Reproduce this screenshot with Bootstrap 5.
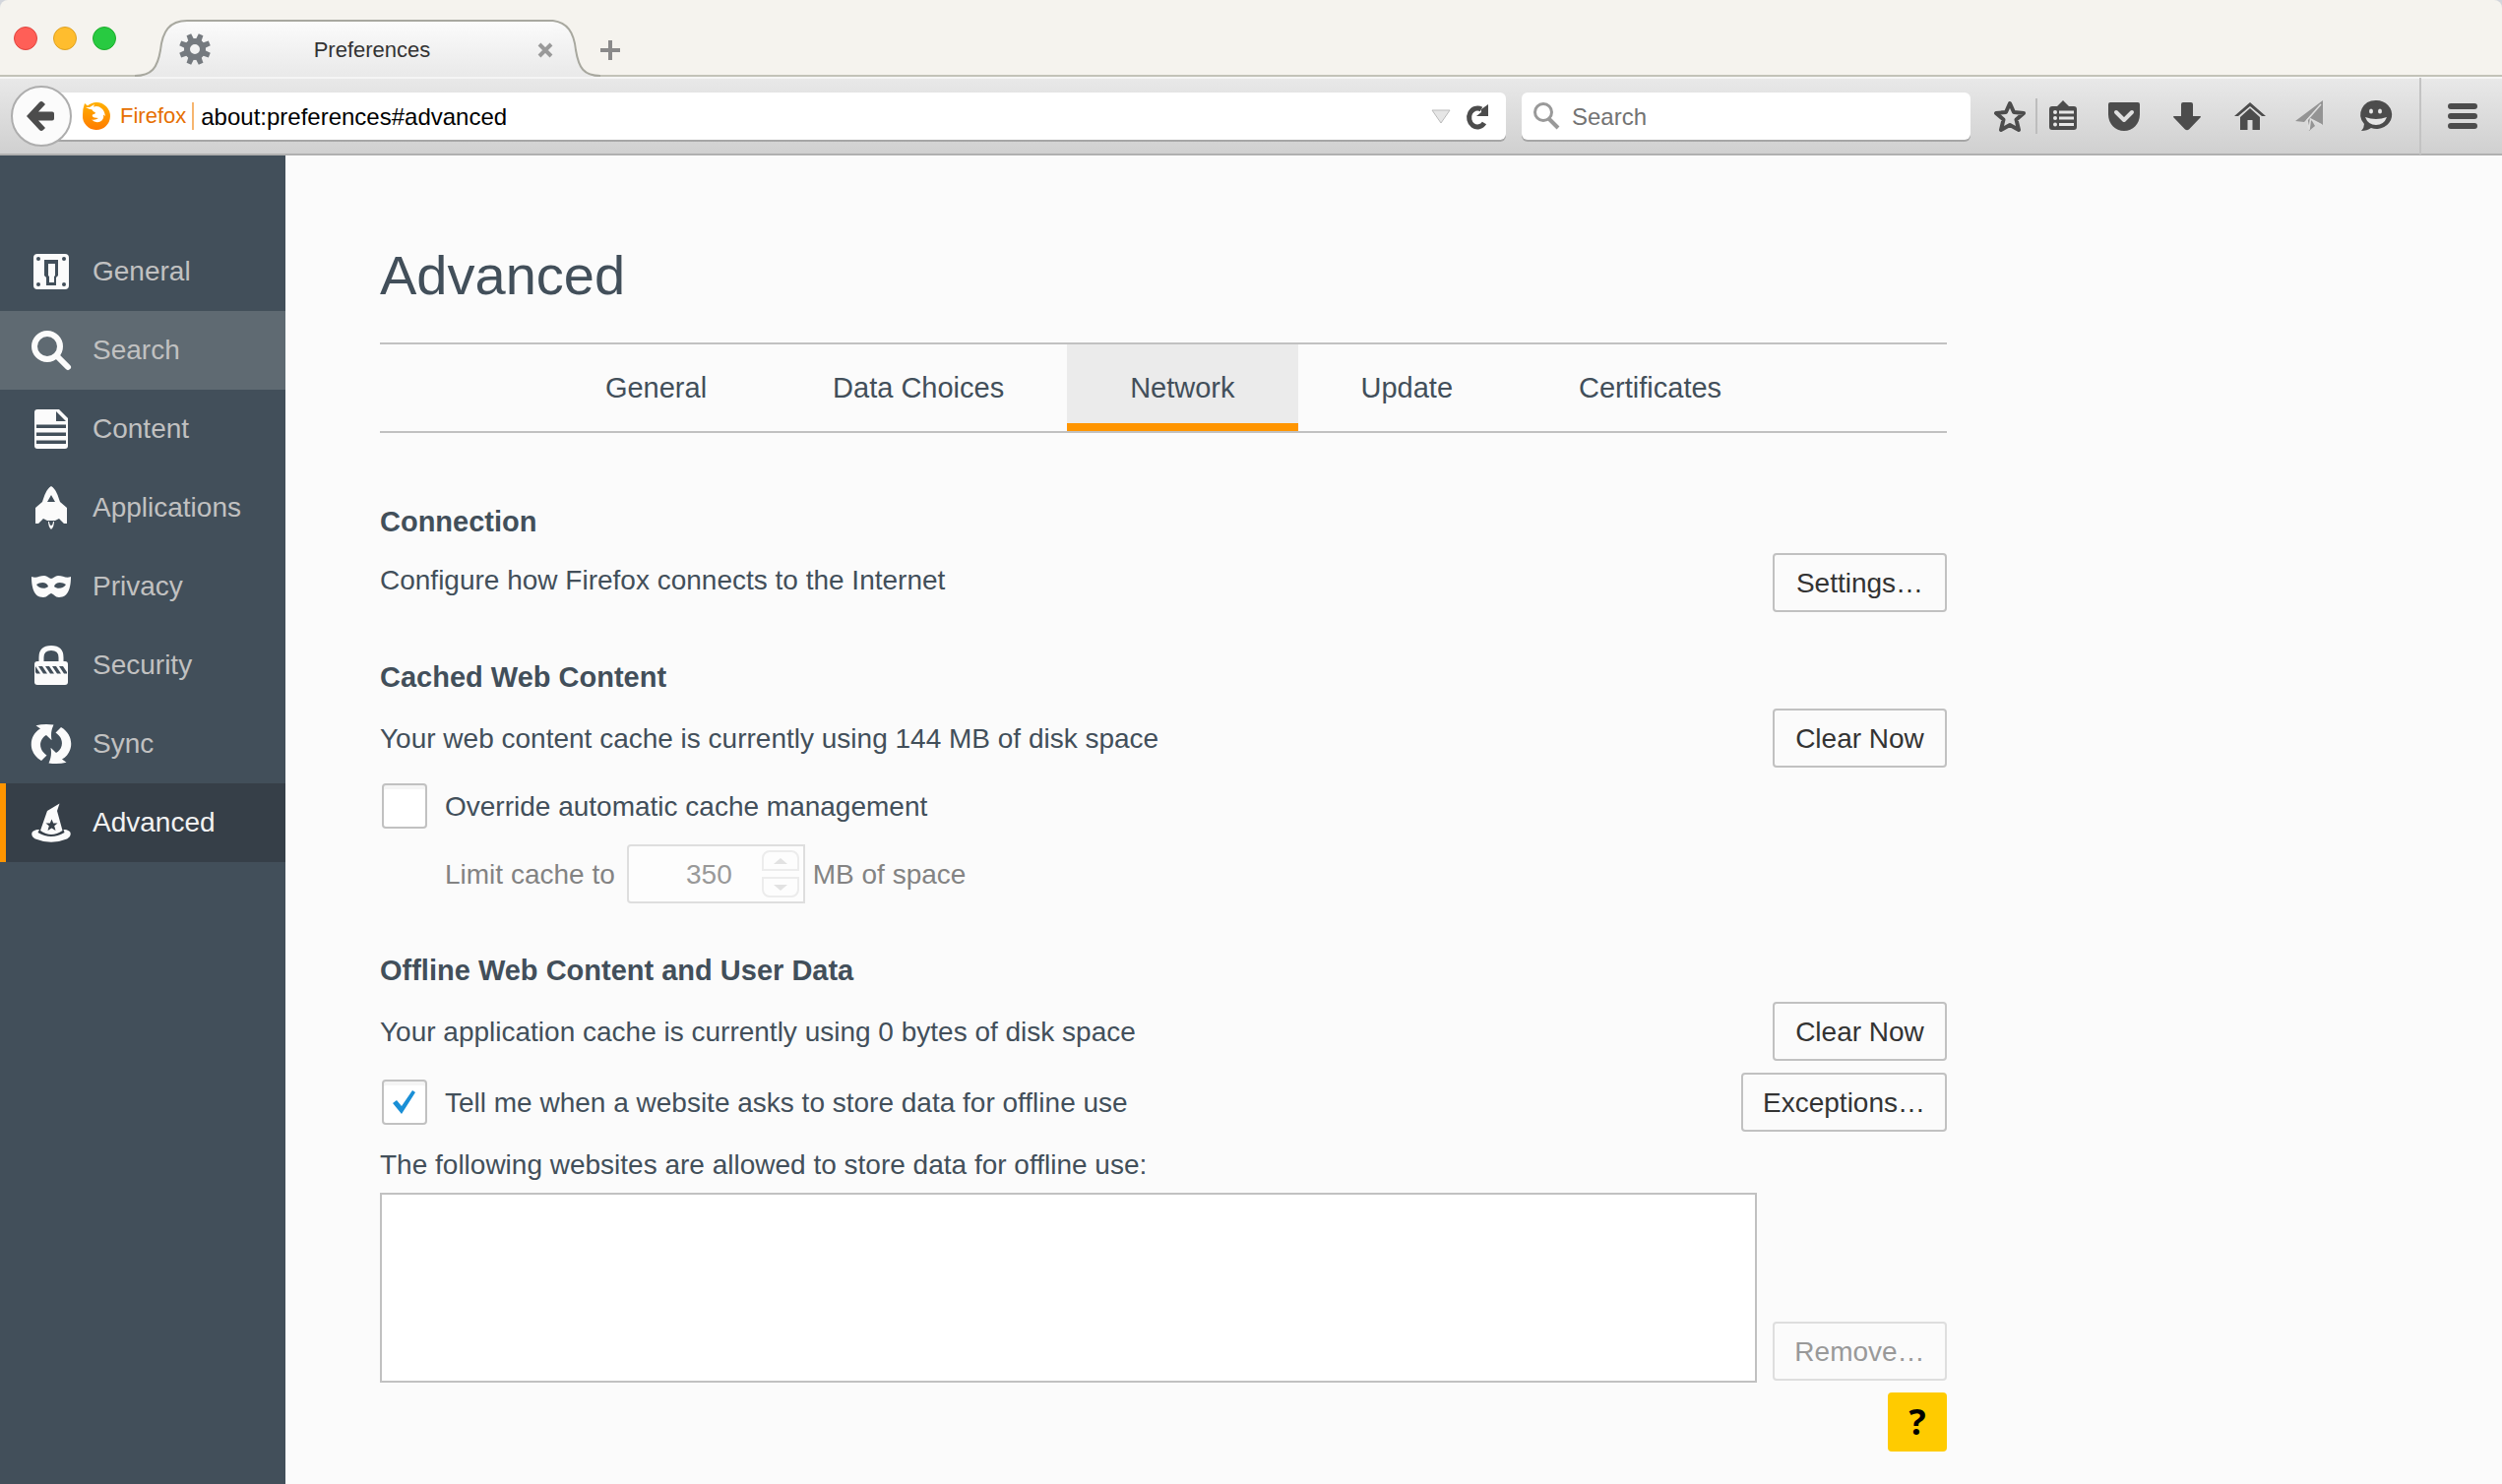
<!DOCTYPE html>
<html lang="en">
<head>
<meta charset="utf-8">
<meta name="viewport" content="width=device-width, initial-scale=1">
<title>Preferences</title>
<link href="https://cdn.jsdelivr.net/npm/bootstrap@5.3.0/dist/css/bootstrap.min.css" rel="stylesheet">
<script src="https://cdn.jsdelivr.net/npm/bootstrap@5.3.0/dist/js/bootstrap.bundle.min.js" defer></script>
<style>
  :root { --ink: #424f5a; --rule: #c1c1c1; --accent: #ff9500; --glyph: #4c4c4c; }
  body { font-family: "Liberation Sans", Arial, sans-serif; font-size: 28px; line-height: 36px; color: var(--ink); background: #fbfbfb; }
  svg { display: block; flex: none; overflow: visible; }
  .plain-btn { border: 0; padding: 0; background: none; color: var(--glyph); line-height: 1; }

  /* tab strip */
  .chrome-top { background: #d3d6dc; }
  .tab-strip { height: 78px; border-radius: 8px 8px 0 0; background: linear-gradient(#c2c2b8, #c2c2b8) bottom / 100% 2px no-repeat #f5f3ee; }
  .lights { gap: 16px; padding-left: 14px; width: 137px; }
  .light { width: 24px; height: 24px; border-radius: 50%; border: 1px solid; }
  .light-close { background: #ff5f57; border-color: #e0443e; }
  .light-min { background: #ffbd2e; border-color: #dea123; }
  .light-max { background: #28ca41; border-color: #1dad2b; }
  .tab-body { width: 372px; height: 58px; border-top: 2px solid #a8a89f; background: linear-gradient(#fbfbfb, #e9e9e9); font-size: 22px; line-height: 28px; color: #333; padding-top: 2px; }

  /* toolbar */
  .tool-bar { height: 80px; padding: 2px 24px 0 11px; background: linear-gradient(#f5f5f5, #f5f5f5) top / 100% 2px no-repeat, linear-gradient(#e9e9e9, #d0d0d0); border-bottom: 2px solid #b0b0b0; }
  .back-btn { width: 62px; height: 62px; border-radius: 50%; border: 2px solid #adadad; background: #fbfbfb; z-index: 1; margin-right: -31px; padding-right: 3px; }
  .field { height: 48px; background: #fff; border-radius: 6px; box-shadow: 0 2px 0 #a6a6a6; }
  .field input { border: 0; outline: 0; background: none; min-width: 0; padding: 2px 0 0; font-size: 24px; line-height: 32px; color: #000; }
  .field input::placeholder { color: #737373; opacity: 1; }
  .url-field { padding: 0 18px 0 42px; }
  .identity { font-size: 22px; line-height: 28px; color: #e66f00; border-right: 2px solid #f6b56f; padding-right: 6px; margin: 0 7px 0 10px; }
  .search-field { flex: 0 1 456px; margin-left: 16px; padding: 0 12px; }
  .icon-row { gap: 32px; }
  .short-line { width: 2px; height: 36px; background: #bdbdbd; margin: 0 8px 0 10px; }
  .tall-line { width: 2px; height: 78px; background: #c3c3c3; margin: 0 26px 0 28px; }

  /* categories */
  .side { width: 290px; background: var(--ink); padding-top: 78px; }
  .side a { display: flex; align-items: center; gap: 22px; height: 80px; padding: 0 0 0 32px; color: #c1c1c1; border-radius: 0; }
  .side svg { fill: #fbfbfb; --hole: #424f5a; }
  .side a.hovered { background: #5f6a72; }
  .side a.active { background: #363f48; color: #f2f2f2; box-shadow: inset 6px 0 0 var(--accent); }
  .side a.active svg { --hole: #363f48; }

  /* pane */
  .pane { padding: 86px 96px 32px; }
  .pane-inner { max-width: 1592px; }
  .pane h1 { font-size: 56px; line-height: 72px; font-weight: 400; margin: 0 0 32px; }
  .pane h2 { font-size: 29px; line-height: 36px; font-weight: 700; margin: 48px 0 14px; }
  .pane .first-head { margin-top: 72px; }
  .pane span, .pane label { padding-top: 2px; }
  .pane .high-text { padding-top: 10px; }
  .pane-tabs { height: 92px; border: solid var(--rule); border-width: 2px 0; }
  .pane-tabs button { border: 0; background: none; padding: 0 64px; font-size: 29px; color: var(--ink); }
  .pane-tabs button.active { background: #ebebeb; box-shadow: inset 0 -8px 0 var(--accent); }
  .pref-btn, .pref-btn:disabled { height: 60px; min-width: 177px; padding: 2px 20px 0; border: 2px solid var(--rule); border-radius: 4px; background: #fbfbfb; font-size: 28px; line-height: 36px; color: #333; }
  .pref-btn:disabled { color: #999; border-color: #dedede; opacity: 1; margin-bottom: 2px; }
  .tick { width: 46px !important; height: 46px !important; margin: 0 !important; border: 2px solid var(--rule); border-radius: 4px !important; background-color: #fff; box-shadow: inset 0 4px 0 #f5f5f5; flex: none; }
  .tick:checked { background-color: #fff; border-color: var(--rule); background-size: 42px 42px; background-image: url("data:image/svg+xml,%3Csvg xmlns='http://www.w3.org/2000/svg' viewBox='0 0 42 42'%3E%3Cpath fill='%231a8fd6' d='M9 22l4-3 5 6L29 9l3 2-14 22z'/%3E%3C/svg%3E"); }
  .tick-row { gap: 18px; padding-left: 2px; }
  .sub-row { margin-top: 16px; padding: 0 0 2px 66px; color: #838383; }
  .spin-box { width: 181px; height: 60px; margin: 0 8px 0 12px; border: 2px solid #dedede; border-radius: 4px 0 0 4px; background: #fdfdfd; padding-right: 4px; }
  .spin-box input { flex: 1; min-width: 0; border: 0; background: none; color: #999; text-align: right; padding: 2px 30px 0 0; appearance: textfield; -moz-appearance: textfield; }
  .spin-box input::-webkit-inner-spin-button { appearance: none; margin: 0; }
  .spin-box button { display: flex; align-items: center; justify-content: center; width: 38px; height: 21px; border: 2px solid #ececec; background: #fdfdfd; padding: 0; }
  .spin-pair { gap: 6px; }
  .spin-up { border-radius: 8px 8px 0 0; }
  .spin-down { border-radius: 0 0 8px 8px; }
  .offline-row { margin-top: 12px; }
  .site-head { margin: 16px 0 10px; }
  .site-list { height: 193px; border: 2px solid var(--rule); background: #fff; }
  .help-btn { width: 60px; height: 60px; margin-top: 10px; border: 0; border-radius: 4px; background: #ffcb00; color: #000; font: 700 36px/44px "Open Sans", sans-serif; padding: 0; }
</style>
</head>
<body class="d-flex flex-column min-vh-100">

<header class="chrome-top">
  <div class="tab-strip d-flex align-items-end">
    <div class="lights d-flex align-items-center align-self-stretch">
      <span class="light light-close"></span><span class="light light-min"></span><span class="light light-max"></span>
    </div>
    <svg width="53" height="58" viewBox="0 0 53 58">
      <defs><linearGradient id="tabFill" gradientUnits="userSpaceOnUse" x1="0" y1="0" x2="0" y2="58"><stop stop-color="#fbfbfb"/><stop offset="1" stop-color="#e9e9e9"/></linearGradient></defs>
      <path fill="url(#tabFill)" d="M0 58C17 57 23 49 26 31C28 12 35 0 53 0V58Z"/>
      <path fill="none" stroke="#a8a89f" stroke-width="2" d="M0 57C17 57 23 49 26 31C28 12 35 1 53 1"/>
    </svg>
    <div class="tab-body d-flex align-items-center">
      <svg width="16" height="32" viewBox="0 0 16 32">
        <g transform="translate(8 15)" fill="#757a7f">
          <circle r="8" fill="none" stroke="#757a7f" stroke-width="6"/>
          <g transform="rotate(22.5)">
            <path d="M-3 -9L-2.500 -16H2.500L3 -9Z"/><path d="M-3 -9L-2.500 -16H2.500L3 -9Z" transform="rotate(45)"/><path d="M-3 -9L-2.500 -16H2.500L3 -9Z" transform="rotate(90)"/><path d="M-3 -9L-2.500 -16H2.500L3 -9Z" transform="rotate(135)"/><path d="M-3 -9L-2.500 -16H2.500L3 -9Z" transform="rotate(180)"/><path d="M-3 -9L-2.500 -16H2.500L3 -9Z" transform="rotate(225)"/><path d="M-3 -9L-2.500 -16H2.500L3 -9Z" transform="rotate(270)"/><path d="M-3 -9L-2.500 -16H2.500L3 -9Z" transform="rotate(315)"/>
          </g>
        </g>
      </svg>
      <span class="flex-grow-1 text-center ps-1">Preferences</span>
      <button class="plain-btn" aria-label="Close tab"><svg width="16" height="16" viewBox="0 0 16 16"><path d="M2 2L14 14M14 2L2 14" stroke="#999" stroke-width="4"/></svg></button>
    </div>
    <svg width="48" height="58" viewBox="6 0 48 58">
      <path fill="url(#tabFill)" d="M6 0C20 2 27 12 29 31C32 49 37 57 54 58H6Z"/>
      <path fill="none" stroke="#a8a89f" stroke-width="2" d="M6 1C20 3 27 12 29 31C32 49 37 57 54 57"/>
    </svg>
    <button class="plain-btn align-self-center pt-4" aria-label="New tab"><svg width="20" height="20" viewBox="0 0 20 20"><path d="M10 0V20M0 10H20" stroke="#8a8a8a" stroke-width="4"/></svg></button>
  </div>

  <div class="tool-bar d-flex align-items-center">
    <button class="back-btn plain-btn position-relative d-flex align-items-center justify-content-center" aria-label="Back">
      <svg width="28" height="30" viewBox="0 0 28 30"><path fill="#4c4c4c" d="M0 15L13 1Q15 -1 17 1L19 3L12 10.500H26Q28 10.500 28 12.500V17.500Q28 19.500 26 19.500H12L19 27L17 29Q15 31 13 29Z"/></svg>
    </button>
    <div class="field url-field d-flex align-items-center flex-grow-1">
      <svg width="28" height="28" viewBox="0 0 28 28">
        <defs><linearGradient id="fox" x1="0" y1="0" x2="0" y2="1"><stop stop-color="#ffb000"/><stop offset="1" stop-color="#ff7b00"/></linearGradient></defs>
        <path fill="url(#fox)" d="M2 1L5 3.500Q9 0 14 0A14 14 0 1 1 0 13Q0 6 2 1Z"/>
        <path fill="#fff" d="M3 5L7 5L12 2L11 4.500Q16 3 19 6Q22 8 23 14L21 12.500Q22 17 18 19.500Q13 21.500 9 17.500Q13 18.500 16 16L12 15.500Q9 14.500 10 12.500Q13 12 13 10.500L10.500 9Q10 6.500 7 7Z"/>
      </svg>
      <span class="identity">Firefox</span>
      <input class="flex-grow-1" type="text" aria-label="Address" value="about:preferences#advanced">
      <button class="plain-btn" aria-label="Show history"><svg width="20" height="15" viewBox="0 0 20 15"><path d="M1 1H19L10 14Z" fill="#e6e6e6" stroke="#bbb"/></svg></button>
      <button class="plain-btn ms-3" aria-label="Reload"><svg width="22" height="24" viewBox="0 0 22 24"><path d="M18 19A8.500 9.500 0 1 1 15 5" fill="none" stroke="#4c4c4c" stroke-width="5"/><path fill="#4c4c4c" d="M22 0V12H10L15 8V5Z"/></svg></button>
    </div>
    <div class="field search-field d-flex align-items-center">
      <svg width="27" height="28" viewBox="0 0 27 28"><circle cx="10" cy="10" r="8.500" fill="none" stroke="#999" stroke-width="3"/><path d="M15 16L25 26" stroke="#999" stroke-width="4"/></svg>
      <input class="flex-grow-1 ms-2 ps-1" type="search" aria-label="Search the web" placeholder="Search">
    </div>
    <button class="plain-btn ms-4" aria-label="Bookmark this page"><svg width="32" height="32" viewBox="0 0 32 32"><path fill="none" stroke="#4c4c4c" stroke-width="4" stroke-linejoin="round" d="M16 3L20 12L30 13L22.500 19.500L25 30L16 25L7 30L9.500 19.500L2 13L12 12Z"/></svg></button>
    <span class="short-line"></span>
    <div class="icon-row d-flex align-items-center">
      <button class="plain-btn" aria-label="Bookmarks"><svg width="32" height="32" viewBox="0 0 32 32"><path fill="#4c4c4c" d="M12 6L18 0L24 6H29Q32 6 32 9V27Q32 30 29 30H7Q4 30 4 27V9Q4 6 7 6Z"/><g fill="#e6e6e6"><circle cx="10" cy="12" r="2"/><circle cx="10" cy="18" r="2"/><circle cx="10" cy="24.500" r="2"/><path d="M14 10.500H29V13.500H14ZM14 16.500H29V19.500H14ZM14 23H29V26H14Z"/></g></svg></button>
      <button class="plain-btn" aria-label="Pocket"><svg width="32" height="32" viewBox="0 0 32 32"><path fill="#4c4c4c" d="M2 2H30Q32 2 32 4V14C32 24 25 31 16 31S0 24 0 14V4Q0 2 2 2Z"/><path fill="none" stroke="#e0e0e0" stroke-width="4" stroke-linecap="round" stroke-linejoin="round" d="M8 12L16 20L24 12"/></svg></button>
      <button class="plain-btn" aria-label="Downloads"><svg width="32" height="32" viewBox="0 0 32 32"><path fill="#4c4c4c" d="M10 4Q10 2 12 2H20Q22 2 22 4V16H29Q31 16 29 18L18 29.500Q16 31 14 29.500L3 18Q1 16 3 16H10Z"/></svg></button>
      <button class="plain-btn" aria-label="Home"><svg width="32" height="32" viewBox="0 0 32 32"><path fill="#4c4c4c" d="M16 2L32 16H28L16 6L4 16H0ZM16 8L26 17V30H18.500V20H13.500V30H6V17Z"/></svg></button>
      <button class="plain-btn" aria-label="Share"><svg width="32" height="32" viewBox="0 0 32 32"><path fill="#949494" d="M26 0L-2 21L7 22L22 6L10 20L12 31L18 26L14 19L26 25Z"/><path d="M24 4L10 20L12 30L13.500 19L25 25" fill="none" stroke="#dedede" stroke-width="1.500"/></svg></button>
      <button class="plain-btn" aria-label="Chat"><svg width="32" height="32" viewBox="0 0 32 32"><path fill="#4c4c4c" d="M16 0A15.500 14.500 0 1 1 11 28Q7 31 1 31Q4 28 4 24A15.500 14.500 0 0 1 16 0Z"/><g fill="#e6e6e6"><ellipse cx="11" cy="11" rx="2" ry="2.500"/><ellipse cx="20" cy="11" rx="2" ry="2.500"/><path d="M5 17Q16 21 27 17Q24 25 16 25T5 17Z"/></g></svg></button>
    </div>
    <span class="tall-line"></span>
    <button class="plain-btn" aria-label="Open menu"><svg width="32" height="28" viewBox="0 0 32 28"><path stroke="#4c4c4c" stroke-width="6" stroke-linecap="round" d="M4 4H28M4 14H28M4 24H28"/></svg></button>
  </div>
</header>

<div class="d-flex flex-grow-1">
  <nav class="side nav flex-column flex-nowrap flex-shrink-0" aria-label="Categories">
    <a class="nav-link" href="#general"><svg width="40" height="40" viewBox="0 0 40 40"><rect x="2" y="2" width="36" height="36" rx="4"/><g style="fill:var(--hole)"><circle cx="7" cy="7" r="2"/><circle cx="33" cy="7" r="2"/><circle cx="7" cy="33" r="2"/><circle cx="33" cy="33" r="2"/><path d="M13 8H27V24L25 26V34H15V26L13 24Z"/></g><path d="M17 12H24V24L23 25V31H18V25L17 24Z"/></svg>General</a>
    <a class="nav-link hovered" href="#search"><svg width="40" height="40" viewBox="0 0 40 40"><circle cx="16" cy="16" r="13" fill="none" stroke="#fbfbfb" stroke-width="6"/><path d="M26 26L37 37" stroke="#fbfbfb" stroke-width="6" stroke-linecap="round"/></svg>Search</a>
    <a class="nav-link" href="#content"><svg width="40" height="40" viewBox="0 0 40 40"><path d="M6 0H28L37 9V37Q37 40 34 40H6Q3 40 3 37V3Q3 0 6 0Z"/><path style="fill:var(--hole)" d="M25 2V12H35ZM5 15.500H35V19H5ZM5 23.500H35V27H5ZM5 31.500H35V35H5Z"/></svg>Content</a>
    <a class="nav-link" href="#applications"><svg width="40" height="40" viewBox="0 0 40 40"><path fill-rule="evenodd" d="M20 -2C25 1 27 8 29 14L36 20V36H33L28 31L24 33H16L12 31L7 36H4V20L11 14C13 8 15 1 20 -2ZM20 7L16 14H24Z"/><path d="M17 34Q17 39 20 42Q23 39 23 34L22 34Q21.500 38 20 38T18 34Z"/></svg>Applications</a>
    <a class="nav-link" href="#privacy"><svg width="40" height="40" viewBox="0 0 40 40"><path fill-rule="evenodd" d="M0 10C5 12 8 9 13 9C16 9 18 12 20 12C22 12 24 9 27 9C32 9 35 12 40 10C40 20 38 31 28 31C24 31 22 27 20 27C18 27 16 31 12 31C2 31 0 20 0 10ZM5 18C7 22 14 23 17 20C16 15 9 15 5 18ZM35 18C31 15 24 15 23 20C26 23 33 22 35 18Z"/></svg>Privacy</a>
    <a class="nav-link" href="#security"><svg width="40" height="40" viewBox="0 0 40 40"><path fill="none" stroke="#fbfbfb" stroke-width="5" d="M10 18V12Q10 2.500 20 2.500T30 12V18"/><rect x="3" y="16" width="34" height="24" rx="3"/><path style="fill:var(--hole)" d="M4 21L9 28.500H5L4 27ZM7 21H11L16 28.500H12ZM14 21H18L23 28.500H19ZM21 21H25L30 28.500H26ZM28 21H32L36 27V28.500H33Z"/></svg>Security</a>
    <a class="nav-link" href="#sync"><svg width="40" height="40" viewBox="0 0 40 40"><path d="M10 37C-4 29 -3 11 9 4.500L4.500 1.300Q13 -1 22.500 .5C20 6 19.500 10 20.500 16.300L15 11C8 15 6 25 15.500 31.500Z"/><path transform="rotate(180 20 20)" d="M10 37C-4 29 -3 11 9 4.500L4.500 1.300Q13 -1 22.500 .5C20 6 19.500 10 20.500 16.300L15 11C8 15 6 25 15.500 31.500Z"/></svg>Sync</a>
    <a class="nav-link active" aria-current="page" href="#advanced"><svg width="40" height="40" viewBox="0 0 40 40"><path d="M28.500 .5L16 8L9 28Q20 36 31.500 28L26 8Z"/><path d="M8 27C-2 27 -1 34 4 36.500Q20 43 36 36.500C41 34 42 27 32.500 27L33.500 30Q20 38 6.500 30Z"/><path style="fill:var(--hole)" d="M20.500 16.500L22.200 20.500H26.500L23.200 23.300L24.500 28L20.500 25.500L16.500 28L17.800 23.300L14.500 20.500H18.800Z"/></svg>Advanced</a>
  </nav>

  <main class="pane flex-grow-1">
    <div class="pane-inner">
      <h1>Advanced</h1>
      <div class="pane-tabs d-flex justify-content-center" role="tablist">
        <button role="tab">General</button>
        <button role="tab">Data Choices</button>
        <button role="tab" class="active" aria-selected="true">Network</button>
        <button role="tab">Update</button>
        <button role="tab">Certificates</button>
      </div>

      <h2 class="first-head">Connection</h2>
      <div class="d-flex justify-content-between align-items-start">
        <span class="high-text">Configure how Firefox connects to the Internet</span>
        <button class="btn pref-btn">Settings…</button>
      </div>

      <h2>Cached Web Content</h2>
      <div class="d-flex justify-content-between align-items-center">
        <span>Your web content cache is currently using 144 MB of disk space</span>
        <button class="btn pref-btn">Clear Now</button>
      </div>
      <div class="tick-row d-flex align-items-center mt-3">
        <input class="form-check-input tick" type="checkbox" id="override">
        <label for="override">Override automatic cache management</label>
      </div>
      <div class="sub-row d-flex align-items-center">
        <label for="limit">Limit cache to</label>
        <div class="spin-box d-flex align-items-center">
          <input type="number" id="limit" value="350" disabled>
          <div class="spin-pair d-flex flex-column">
            <button class="spin-up" disabled aria-label="Increase"><svg width="14" height="6" viewBox="0 0 14 6"><path d="M0 6L7 0L14 6Z" fill="#e2e2e2"/></svg></button>
            <button class="spin-down" disabled aria-label="Decrease"><svg width="14" height="6" viewBox="0 0 14 6"><path d="M0 0L7 6L14 0Z" fill="#e2e2e2"/></svg></button>
          </div>
        </div>
        <span>MB of space</span>
      </div>

      <h2>Offline Web Content and User Data</h2>
      <div class="d-flex justify-content-between align-items-center">
        <span>Your application cache is currently using 0 bytes of disk space</span>
        <button class="btn pref-btn">Clear Now</button>
      </div>
      <div class="offline-row d-flex justify-content-between align-items-center">
        <div class="tick-row d-flex align-items-center">
          <input class="form-check-input tick" type="checkbox" id="tell" checked>
          <label for="tell">Tell me when a website asks to store data for offline use</label>
        </div>
        <button class="btn pref-btn">Exceptions…</button>
      </div>
      <div id="sitesLabel" class="site-head">The following websites are allowed to store data for offline use:</div>
      <div class="d-flex align-items-end gap-3">
        <div class="site-list flex-grow-1" role="listbox" aria-labelledby="sitesLabel"></div>
        <button class="btn pref-btn" disabled>Remove…</button>
      </div>
      <div class="d-flex justify-content-end">
        <button class="help-btn" aria-label="Help">?</button>
      </div>
    </div>
  </main>
</div>
</body>
</html>
